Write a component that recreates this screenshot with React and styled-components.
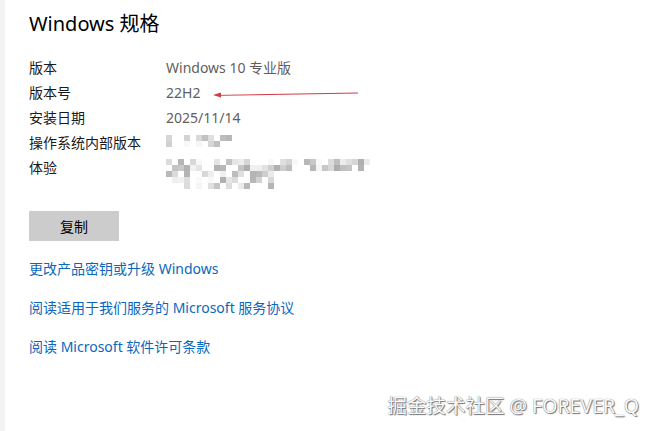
import React from "react"
import styled, { createGlobalStyle } from "styled-components"

const GlobalStyle = createGlobalStyle`
  html, body {
    margin: 0;
    padding: 0;
    background: #ffffff;
    overflow: hidden;
  }
  body {
    font-family: "Segoe UI", "Noto Sans", "Noto Sans CJK SC", sans-serif;
  }
`

const Page = styled.div`
  position: relative;
  display: flex;
  width: 652px;
  height: 431px;
  background: #ffffff;
`

const Strip = styled.div`
  width: 5px;
  flex: none;
  background: #f3f3f3;
`

const Content = styled.div`
  display: flex;
  flex-direction: column;
  padding: 10px 0 0 24px;
`

const Title = styled.h1`
  margin: 0 0 17px;
  font-size: 20px;
  line-height: 28px;
  font-weight: 400;
  color: #000;
`

const Specs = styled.div`
  display: grid;
  grid-template-columns: 137px auto;
  grid-auto-rows: 25px;
  font-size: 14px;
  line-height: 25px;
`

const Label = styled.div`
  color: #1a1a1a;
`

const Value = styled.div`
  color: #5f5f5f;
  ${p => p.$tall && "grid-row: span 2;"}
`

const Mosaic = styled.svg`
  display: block;
  margin-top: ${p => p.$top}px;
`

const CopyButton = styled.button`
  width: 90px;
  height: 30px;
  margin-top: 6px;
  border: none;
  background: #cccccc;
  font: inherit;
  font-size: 14px;
  color: #000;
`

const Links = styled.div`
  display: flex;
  flex-direction: column;
  gap: 19px;
  margin-top: 18px;
`

const Link = styled.a`
  font-size: 14px;
  line-height: 20px;
  color: #0a67bd;
  text-decoration: none;
`

const Watermark = styled.div`
  position: absolute;
  right: 13px;
  bottom: 12px;
  font-size: 19.5px;
  color: #fafafa;
  text-shadow: 0 0 1px #555, 1px 1px 1px #777;
  white-space: nowrap;
`

const ArrowSvg = styled.svg`
  position: absolute;
  left: 210px;
  top: 88px;
`

const rnd = seed => {
  let s = seed
  return () => {
    s = (s * 9301 + 49297) % 233280
    return s / 233280
  }
}

function Pixelated({ rows, cell = 6, seed, top = 0 }) {
  const r = rnd(seed)
  const width = Math.max(...rows) * cell
  const cells = []
  rows.forEach((cols, y) => {
    for (let x = 0; x < cols; x++) {
      if (r() < 0.35) continue
      const g = Math.round(170 + r() * 80)
      cells.push(
        <rect key={`${y}-${x}`} x={x * cell} y={y * cell} width={cell} height={cell}
          fill={`rgb(${g},${g},${g})`} />
      )
    }
  })
  return (
    <Mosaic $top={top} width={width} height={rows.length * cell}>
      {cells}
    </Mosaic>
  )
}

const specs = [
  ["版本", "Windows 10 专业版"],
  ["版本号", "22H2"],
  ["安装日期", "2025/11/14"],
]

export default function App() {
  return (
    <Page>
      <GlobalStyle />
      <Strip />
      <Content>
        <Title>Windows 规格</Title>
        <Specs>
          {specs.map(([k, v]) => (
            <React.Fragment key={k}>
              <Label>{k}</Label>
              <Value>{v}</Value>
            </React.Fragment>
          ))}
          <Label>操作系统内部版本</Label>
          <Value>
            <Pixelated rows={[11, 9]} cell={6} seed={7} top={5} />
          </Value>
          <Label>体验</Label>
          <Value $tall>
            <Pixelated rows={[35, 35, 18, 18, 18]} cell={6} seed={31} top={4} />
          </Value>
        </Specs>
        <CopyButton>复制</CopyButton>
        <Links>
          <Link>更改产品密钥或升级 Windows</Link>
          <Link>阅读适用于我们服务的 Microsoft 服务协议</Link>
          <Link>阅读 Microsoft 软件许可条款</Link>
        </Links>
      </Content>
      <ArrowSvg width="152" height="12" viewBox="0 0 152 12">
        <polygon points="4,7 148,4.6 148,5.6 12,7.8" fill="#d23a45" />
        <polygon points="3,7 11,4.5 11,9.5" fill="#d23a45" />
      </ArrowSvg>
      <Watermark>掘金技术社区 @ FOREVER_Q</Watermark>
    </Page>
  )
}
